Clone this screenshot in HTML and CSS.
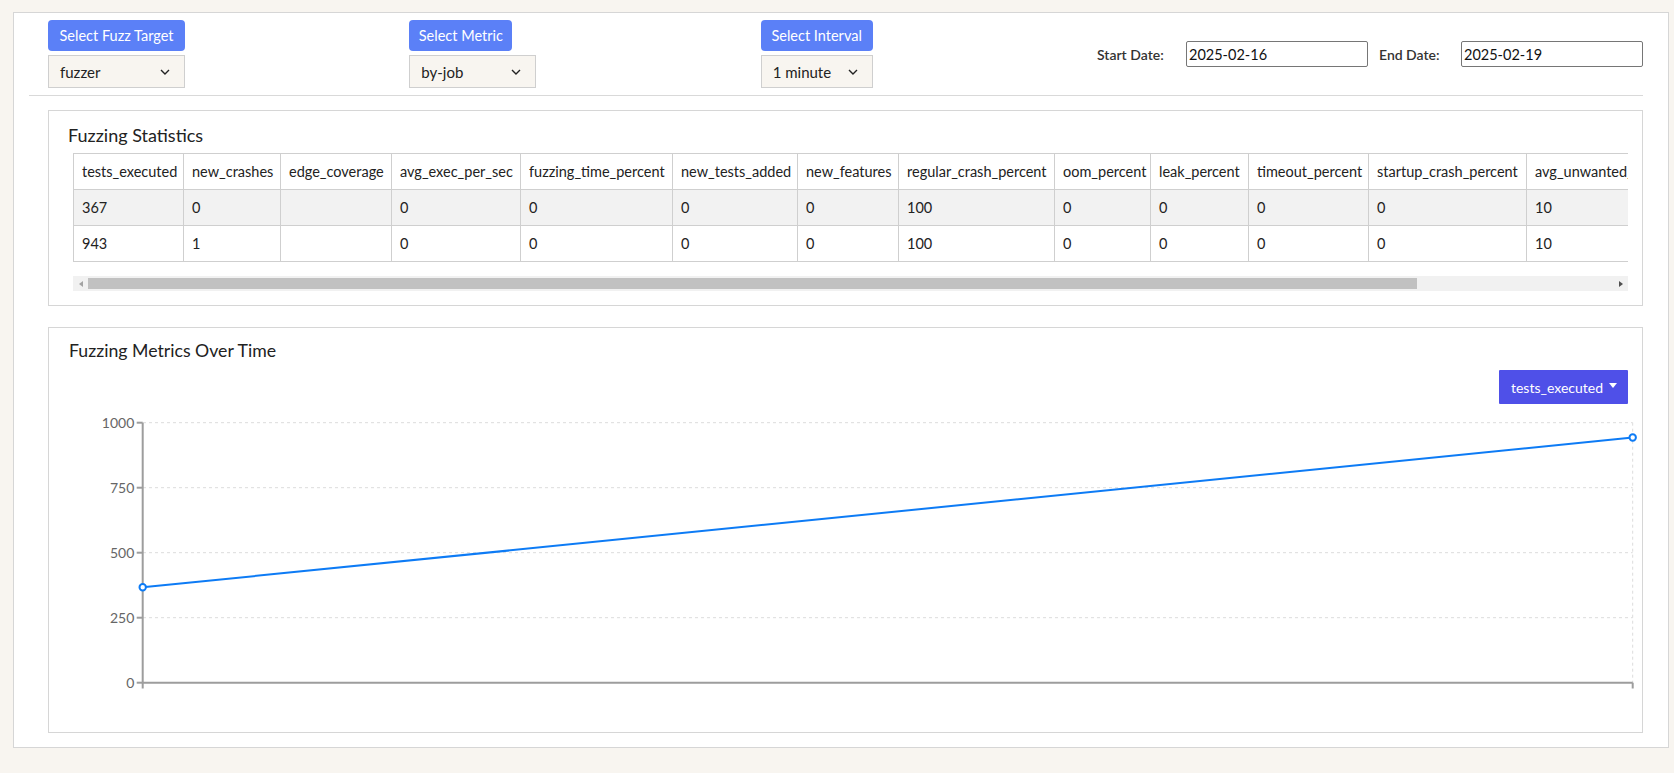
FILE: index.html
```html
<!DOCTYPE html>
<html lang="en">
<head>
<meta charset="utf-8">
<title>Fuzzing Dashboard</title>
<link rel="stylesheet" href="styles.css">
</head>
<body>
<div class="page">
  <div class="topbar">
    <div class="ctl">
      <button class="btn-label w-target">Select Fuzz Target</button>
      <div class="select w-target"><span>fuzzer</span><svg class="chev" width="10" height="6" viewBox="0 0 10 6"><path d="M1 1 L5 5 L9 1" fill="none" stroke="#222" stroke-width="1.4"/></svg></div>
    </div>
    <div class="ctl">
      <button class="btn-label w-metric-btn">Select Metric</button>
      <div class="select w-metric"><span>by-job</span><svg class="chev" width="10" height="6" viewBox="0 0 10 6"><path d="M1 1 L5 5 L9 1" fill="none" stroke="#222" stroke-width="1.4"/></svg></div>
    </div>
    <div class="ctl">
      <button class="btn-label w-interval">Select Interval</button>
      <div class="select w-interval"><span>1 minute</span><svg class="chev" width="10" height="6" viewBox="0 0 10 6"><path d="M1 1 L5 5 L9 1" fill="none" stroke="#222" stroke-width="1.4"/></svg></div>
    </div>
    <div class="dates">
      <label class="date-label">Start Date:</label>
      <input class="date-input" type="text" value="2025-02-16">
      <label class="date-label end">End Date:</label>
      <input class="date-input" type="text" value="2025-02-19">
    </div>
  </div>
  <hr class="divider">

  <section class="card stats">
    <h5 class="card-title">Fuzzing Statistics</h5>
    <div class="table-wrap">
      <table class="stats-table">
        <colgroup>
          <col class="c110"><col class="c97"><col class="c111"><col class="c129"><col class="c152"><col class="c125"><col class="c101"><col class="c156"><col class="c96"><col class="c98"><col class="c120"><col class="c158"><col class="c178"><col class="c153">
        </colgroup>
        <thead>
          <tr><th>tests_executed</th><th>new_crashes</th><th>edge_coverage</th><th>avg_exec_per_sec</th><th>fuzzing_time_percent</th><th>new_tests_added</th><th>new_features</th><th>regular_crash_percent</th><th>oom_percent</th><th>leak_percent</th><th>timeout_percent</th><th>startup_crash_percent</th><th>avg_unwanted_log_lines</th><th>runs_count</th></tr>
        </thead>
        <tbody>
          <tr class="odd"><td>367</td><td>0</td><td></td><td>0</td><td>0</td><td>0</td><td>0</td><td>100</td><td>0</td><td>0</td><td>0</td><td>0</td><td>10</td><td>1</td></tr>
          <tr><td>943</td><td>1</td><td></td><td>0</td><td>0</td><td>0</td><td>0</td><td>100</td><td>0</td><td>0</td><td>0</td><td>0</td><td>10</td><td>1</td></tr>
        </tbody>
      </table>
    </div>
    <div class="hscroll">
      <span class="sb-btn"><span class="sb-arrow left"></span></span>
      <div class="sb-track"><div class="sb-thumb"></div></div>
      <span class="sb-btn"><span class="sb-arrow right"></span></span>
    </div>
  </section>

  <section class="card chart">
    <h5 class="card-title big">Fuzzing Metrics Over Time</h5>
    <div class="chart-toolbar">
      <button class="metric-btn">tests_executed<span class="caret"></span></button>
    </div>
    <svg class="chart-svg" width="1571" height="308" viewBox="0 0 1571 308">
      <g stroke="#dcdcdc" stroke-width="1" stroke-dasharray="3 3" fill="none">
        <line x1="74" y1="12.7" x2="1563.7" y2="12.7"/>
        <line x1="74" y1="77.7" x2="1563.7" y2="77.7"/>
        <line x1="74" y1="142.7" x2="1563.7" y2="142.7"/>
        <line x1="74" y1="207.7" x2="1563.7" y2="207.7"/>
        <line x1="1563.7" y1="12.7" x2="1563.7" y2="272.7"/>
      </g>
      <g stroke="#9d9d9d" stroke-width="2" fill="none">
        <line x1="73.7" y1="12.7" x2="73.7" y2="272.7"/>
        <line x1="73.7" y1="272.7" x2="1563.7" y2="272.7"/>
        <line x1="67.7" y1="12.7" x2="73.7" y2="12.7"/>
        <line x1="67.7" y1="77.7" x2="73.7" y2="77.7"/>
        <line x1="67.7" y1="142.7" x2="73.7" y2="142.7"/>
        <line x1="67.7" y1="207.7" x2="73.7" y2="207.7"/>
        <line x1="67.7" y1="272.7" x2="73.7" y2="272.7"/>
        <line x1="73.7" y1="272.7" x2="73.7" y2="278.5"/>
        <line x1="1563.7" y1="272.7" x2="1563.7" y2="278.5"/>
      </g>
      <g class="tick-labels" text-anchor="end">
        <text x="65.3" y="17.5">1000</text>
        <text x="65.3" y="82.5">750</text>
        <text x="65.3" y="147.5">500</text>
        <text x="65.3" y="212.5">250</text>
        <text x="65.3" y="277.5">0</text>
      </g>
      <line x1="73.7" y1="177.3" x2="1563.7" y2="27.5" stroke="#0d7bf5" stroke-width="2"/>
      <circle cx="73.7" cy="177.3" r="3.2" fill="#fff" stroke="#0d7bf5" stroke-width="2"/>
      <circle cx="1563.7" cy="27.5" r="3.2" fill="#fff" stroke="#0d7bf5" stroke-width="2"/>
    </svg>
  </section>
</div>
</body>
</html>
```

FILE: styles.css
```css
* { box-sizing: border-box; }

body {
  margin: 0;
  background: #f8f5f0;
  font-family: Lato, "Noto Sans", sans-serif;
  color: #222;
}

.page {
  margin: 12px 5px 0 13px;
  background: #fff;
  border: 1px solid #d6d6d6;
  padding: 7px 25px 14px 15px;
}

/* ---------- top controls ---------- */
.topbar {
  display: flex;
  justify-content: space-between;
  align-items: center;
  padding-left: 19px;
}

.ctl {
  display: flex;
  flex-direction: column;
  align-items: flex-start;
  gap: 4px;
}

.btn-label {
  height: 31px;
  border: 0;
  border-radius: 4px;
  background: #5b80f7;
  color: #fff;
  font-family: Lato, "Noto Sans", sans-serif;
  font-size: 14.5px;
  padding: 0;
  text-align: center;
}

.select {
  height: 33px;
  border: 1px solid #cfcfcf;
  background: #f8f5f0;
  display: flex;
  align-items: center;
  justify-content: space-between;
  padding: 0 14px 0 11px;
  font-size: 15px;
  color: #222;
}

.chev { display: block; }

.w-target { width: 137px; }
.w-metric-btn { width: 103px; }
.w-metric { width: 127px; }
.w-interval { width: 112px; }

.dates {
  display: flex;
  align-items: center;
}

.date-label {
  width: 89px;
  font-size: 14px;
  font-weight: 600;
  color: #333;
}

.date-label.end {
  width: 82px;
  margin-left: 11px;
}

.date-input {
  width: 182px;
  height: 26px;
  border: 1px solid #767676;
  border-radius: 2px;
  padding: 0 2px;
  font-family: Lato, "Noto Sans", sans-serif;
  font-size: 14.5px;
  color: #111;
  background: #fff;
}

.divider {
  margin: 7px 0 14px;
  border: 0;
  border-top: 1px solid #d9d9d9;
  height: 0;
}

/* ---------- cards ---------- */
.card {
  border: 1px solid #d6d6d6;
  margin-left: 19px;
  background: #fff;
}

.card-title {
  margin: 0 0 7px;
  font-size: 18px;
  line-height: 22px;
  font-weight: 400;
  color: #222;
}

.card-title.big {
  font-size: 17.7px;
  line-height: 24px;
  margin: 0;
}

.stats {
  padding: 13px 14px 14px 24px;
}

.stats .card-title { margin-left: -5px; }

.table-wrap {
  overflow: hidden;
  margin-bottom: 14px;
}

.stats-table {
  table-layout: fixed;
  width: 1784px;
  border-collapse: collapse;
  font-size: 14.5px;
  color: #222;
}

.stats-table th,
.stats-table td {
  border: 1px solid #cfcfcf;
  padding: 7px 8px;
  line-height: 21px;
  text-align: left;
  font-weight: 400;
  white-space: nowrap;
  overflow: hidden;
}

.stats-table tr.odd td { background: #f2f2f2; }

.c110 { width: 110px; }
.c97 { width: 97px; }
.c111 { width: 111px; }
.c129 { width: 129px; }
.c152 { width: 152px; }
.c125 { width: 125px; }
.c101 { width: 101px; }
.c156 { width: 156px; }
.c96 { width: 96px; }
.c98 { width: 98px; }
.c120 { width: 120px; }
.c158 { width: 158px; }
.c178 { width: 178px; }
.c153 { width: 153px; }

/* fake horizontal scrollbar (classic style) */
.hscroll {
  display: flex;
  height: 15px;
  background: #f1f1f1;
}

.sb-btn {
  width: 15px;
  flex: none;
  display: flex;
  align-items: center;
  justify-content: center;
}

.sb-arrow {
  width: 0;
  height: 0;
  border-top: 3.5px solid transparent;
  border-bottom: 3.5px solid transparent;
}

.sb-arrow.left { border-right: 4px solid #a3a3a3; }
.sb-arrow.right { border-left: 4px solid #505050; }

.sb-track {
  flex: 1;
  padding: 2px 0;
}

.sb-thumb {
  width: 87.15%;
  height: 11px;
  background: #c1c1c1;
}

.chart {
  margin-top: 21px;
  padding: 11px 2px 14px 20px;
}

.chart-toolbar {
  display: flex;
  justify-content: flex-end;
  margin: 7px 12px 0 0;
}

.metric-btn {
  height: 34px;
  border: 0;
  border-radius: 1px;
  background: #4f50e8;
  color: #fff;
  font-family: Lato, "Noto Sans", sans-serif;
  font-size: 14px;
  padding: 0 11px 0 12px;
  display: flex;
  align-items: center;
}

.caret {
  display: inline-block;
  margin-left: 6px;
  border-top: 5px solid #fff;
  border-left: 4px solid transparent;
  border-right: 4px solid transparent;
  margin-top: -3px;
}

.chart-svg {
  display: block;
  margin-top: 6px;
  overflow: visible;
}

.tick-labels {
  font-family: Lato, "Noto Sans", sans-serif;
  font-size: 14px;
  fill: #666;
}
```
